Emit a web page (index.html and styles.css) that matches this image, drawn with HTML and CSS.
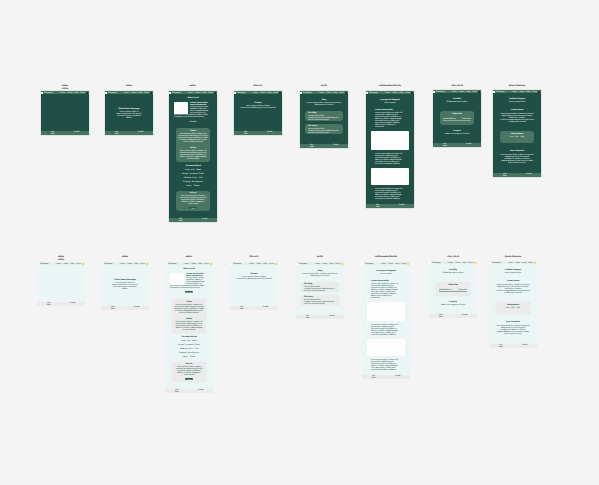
FILE: index.html
```html
<!DOCTYPE html>
<html lang="en">
<head>
<meta charset="utf-8">
<title>Artboards</title>
<link rel="stylesheet" href="styles.css">
</head>
<body>
<main class="canvas">
  <section class="row dark" id="boards">
    <figure class="artboard"><figcaption>HOME<br>LOGIN</figcaption>
      <div class="board short"><div class="content"></div></div></figure>

    <figure class="artboard"><figcaption>HOME</figcaption>
      <div class="board short tall-light"><div class="content home">
        <h2>Client Name Messages</h2>
        <p>Lorem ipsum dolor sit<br>amet consectetur elit sed do<br>eiusmod tempor incididunt<br>labore</p>
      </div></div></figure>

    <figure class="artboard"><figcaption>ABOUT</figcaption>
      <div class="board about"><div class="content">
        <h2>About Us all</h2>
        <div class="intro"><div class="photo"></div>
          <p><b>Lorem ipsum dolor</b><br><b>amet consectetur</b><br>sed eiusmod tempor<br>incididunt labore et<br>dolore magna aliqua<br>enim ad minim ve<br>quis nostrud exercitation ullamco labor<br>ut aliquip ex ea commodo conseq</p></div>
        <button type="button">Contact</button>
        <div class="card story">
          <h3>Vision</h3>
          <p>Lorem ipsum dolor sit amet elit<br>consectetur adipiscing elit sed do<br>eiusmod tempor incididunt ut labor<br>et dolore magna aliqua ut enim<br>minim veniam nostrud</p>
          <h3>Values</h3>
          <p>Lorem ipsum dolor sit amet elit<br>consectetur adipiscing elit sed<br>eiusmod tempor incididunt ut<br>labore et dolore magna aliqua<br>ut enim minim</p>
        </div>
        <h3>The team behind</h3>
        <p class="team">Anna &nbsp; Erik &nbsp; Marie<br>Design &nbsp;Research &nbsp;Code<br>Johanna &nbsp;Peter &nbsp; Alex<br>Strategy &nbsp;Development<br>Karin &nbsp; &nbsp; Oscar</p>
        <div class="card join">
          <h3>Join us</h3>
          <p>Lorem ipsum dolor sit amet<br>consectetur adipiscing elit sed<br>eiusmod tempor incididunt<br>labore et dolore magna ut<br>enim minim</p>
          <button type="button">Apply</button>
        </div>
      </div></div></figure>

    <figure class="artboard"><figcaption>CONTACT</figcaption>
      <div class="board short tall-light"><div class="content contact">
        <h2>Contact</h2>
        <p>Lorem ipsum dolor sit amet<br>consectetur adipiscing elit sed eiusmod</p>
      </div></div></figure>

    <figure class="artboard"><figcaption>BLOG</figcaption>
      <div class="board blog"><div class="content">
        <h2>Blog</h2>
        <p>Lorem ipsum dolor sit amet consectetur<br>adipiscing elit sed do</p>
        <article class="card post"><h3>Our blog</h3><p>Lorem ipsum dolor<br>sit amet consectetur adipiscing elit<br>sed do eiusmod tempor</p></article>
        <article class="card post"><h3>Our story</h3><p>Lorem ipsum dolor<br>sit amet consectetur adipiscing elit<br>sed do eiusmod tempor</p></article>
      </div></div></figure>

    <figure class="artboard"><figcaption>PROGRAM/BLOGPAGE</figcaption>
      <div class="board article"><div class="content">
        <h2>In progress blogpost</h2>
        <p>Lorem ipsum</p>
        <div class="copy"><h3>Lorem ipsum dolor</h3>
          <p>Lorem ipsum dolor sit amet elit<br>consectetur adipiscing elit<br>eiusmod tempor incididunt ut<br>labore et dolore magna aliqua<br>enim ad minim veniam quis<br>nostrud exercitation ullamco<br>laboris nisi ut aliquip ex<br>commodo</p></div>
        <div class="picture"></div>
        <p class="copy">Lorem ipsum dolor sit amet elit<br>consectetur adipiscing elit<br>eiusmod tempor incididunt ut<br>labore et dolore magna aliqua<br>enim ad minim veniam quis<br>nostrud exercitation ullamco</p>
        <div class="picture low"></div>
        <p class="copy">Lorem ipsum dolor sit amet elit<br>consectetur adipiscing elit<br>eiusmod tempor incididunt ut<br>labore et dolore magna aliqua<br>enim ad minim veniam quis<br>nostrud exercitation ullamco</p>
      </div></div></figure>

    <figure class="artboard raised"><figcaption>PORTFOLIO</figcaption>
      <div class="board portfolio"><div class="content">
        <h2>Portfolio</h2>
        <p>Collaborate and explore</p>
        <div class="card search"><h3>Subscribe</h3><p class="fields"><span>Email address</span><span>Subscribe</span></p></div>
        <h2>Projects</h2>
        <p>Watch our progress of work</p>
      </div></div></figure>

    <figure class="artboard raised"><figcaption>QUESTIONNAIRE</figcaption>
      <div class="board project"><div class="content">
        <h2>Problem Support</h2>
        <p>Lorem ipsum dolor</p>
        <h3>Lorem ipsum</h3>
        <p>Lorem ipsum dolor sit amet consectet<br>adipiscing elit sed eiusmod tempor<br>incididunt ut labore<br>et dolore magna aliqua enim ad minim<br>veniam quis nostrud</p>
        <div class="card pick"><h3>Requirement</h3><p>Low &nbsp; Mid &nbsp; High</p></div>
        <h3>User Research</h3>
        <p>Lorem ipsum dolor sit amet consectet<br>adipiscing elit sed eiusmod<br>incididunt ut labore et dolore<br>magna aliqua ut enim minim veniam<br>quis nostrud exercit</p>
      </div></div></figure>
  </section>
</main>

<template id="topbar">
  <header><i class="logo"></i><span>Company</span><nav><a href="#">Home</a><a href="#">About</a><a href="#">Blog</a><a href="#">Work</a></nav><i class="mode"></i></header>
</template>
<template id="bottombar">
  <footer><span>Info<br>Mail</span><span>Social</span></footer>
</template>
<script src="boards.js"></script>
</body>
</html>
```
FILE: styles.css
```css
* { box-sizing: border-box; margin: 0; padding: 0; }

body {
  background: #f4f4f4;
  font-family: "Liberation Sans", sans-serif;
  font-size: 2px;
  line-height: 2px;
  text-rendering: geometricPrecision;
}

.canvas { padding-top: 84px; padding-bottom: 84px; }

.row {
  display: grid;
  grid-template-columns: 64fr 64fr 65fr 66fr 66fr 67fr 60fr 48fr;
  align-items: start;
  padding: 0 58px 0 41px;
}

.row.light { padding: 0 62px 0 37px; margin-top: 33px; }

.artboard { width: 48px; }

figcaption {
  display: flow-root;
  height: 7px;
  padding-top: 1px;
  color: #000;
  font-weight: bold;
  line-height: 3px;
  text-align: center;
  white-space: nowrap;
}

.raised figcaption { height: 6px; }

.dark {
  --page: #1f4f45;
  --bar: #477361;
  --card: #4a7563;
  --text: #ffffff;
  --title: #ffffff;
  --button: #1f5a4b;
  --mode: #17382f;
}

.light {
  --page: #ecf5f5;
  --bar: #e8eeed;
  --card: #ebebeb;
  --text: #0f4a3a;
  --title: #003d2c;
  --button: #27594b;
  --mode: #f0df55;
}

.board {
  display: flex;
  flex-direction: column;
  background: var(--page);
  color: var(--text);
  text-align: center;
  white-space: nowrap;
}

.dark .board { box-shadow: 0 0 1px #7d9c90; }
.short { min-height: 44px; }
.light .tall-light { min-height: 48px; }
.about { min-height: 131px; }
.blog { min-height: 57px; }
.article { min-height: 117px; }
.portfolio { min-height: 57px; }
.project { min-height: 87px; }

.content { flex: 1; }

header {
  display: flex;
  align-items: center;
  height: 3px;
  background: var(--bar);
}

.logo { width: 2px; height: 2px; background: #fff; }
header span { margin-left: 1px; }
nav { display: flex; gap: 2px; margin-left: auto; }
nav a { color: inherit; text-decoration: none; }
.mode { width: 2px; height: 2px; margin: 0 1px; background: var(--mode); }

footer {
  display: flex;
  justify-content: space-around;
  height: 4px;
  background: var(--bar);
}

.light footer { background: #ebebeb; }

h2, h3 {
  color: var(--title);
  font-size: 2px;
  line-height: 3px;
}

.card { margin: 0 7px; background: var(--card); border-radius: 3px; }
.light .card { box-shadow: 0 0 1px #cfcfcf; }

button {
  display: block;
  margin: 0 auto;
  padding: 0 1px;
  border: 0;
  border-radius: 1px;
  background: var(--button);
  color: #fff;
  font: inherit;
}

.home { padding-top: 14px; }
.contact { padding-top: 8px; }

.about .content { padding-top: 3px; }
.intro { padding: 2px 5px; text-align: left; }
.photo { float: left; width: 14px; height: 12px; margin-right: 2px; background: #fff; border-radius: 1px; }
.story { height: 34px; margin-top: 6px; padding-top: 2px; }
.story h3 + p { margin-bottom: 4px; }
.story + h3 { margin-top: 3px; }
.team { line-height: 4px; }
.join { height: 20px; margin-top: 3px; padding-top: 1px; }
.join button { margin-top: 2px; }

.blog .content { padding-top: 5px; }
.post { height: 10px; margin: 0 5px 3px; padding: 1px 3px; text-align: left; }
.blog .content > p { margin-bottom: 5px; }

.article .content { padding-top: 5px; }
.article h2 + p { margin-bottom: 5px; }
.copy { padding-left: 9px; text-align: left; }
.picture { height: 19px; margin: 3px 5px; background: #fff; border-radius: 1px; }
.picture.low { height: 17px; }

.portfolio .content { padding-top: 5px; }
.search { height: 14px; margin-top: 8px; margin-bottom: 5px; padding: 2px 3px; }
.fields { display: flex; justify-content: space-between; margin-top: 2px; border-bottom: 1px solid #8aa79b; }

.project .content { padding-top: 5px; }
.project .content > p + h3 { margin-top: 6px; }
.project .content > h3 + p { margin-top: 1px; }
.pick { height: 12px; margin-top: 8px; margin-bottom: 7px; padding-top: 2px; }
.light .picture { background: #fdfdfd; }
```
FILE: boards.js
```js
// Give every board its shared bars, then repeat the set in the light theme.
const boards = document.getElementById('boards');
const topbar = document.getElementById('topbar').content;
const bottombar = document.getElementById('bottombar').content;

boards.querySelectorAll('.board').forEach((board) => {
  board.prepend(topbar.cloneNode(true));
  board.append(bottombar.cloneNode(true));
});

const light = boards.cloneNode(true);
light.removeAttribute('id');
light.className = 'row light';
boards.after(light);
```
